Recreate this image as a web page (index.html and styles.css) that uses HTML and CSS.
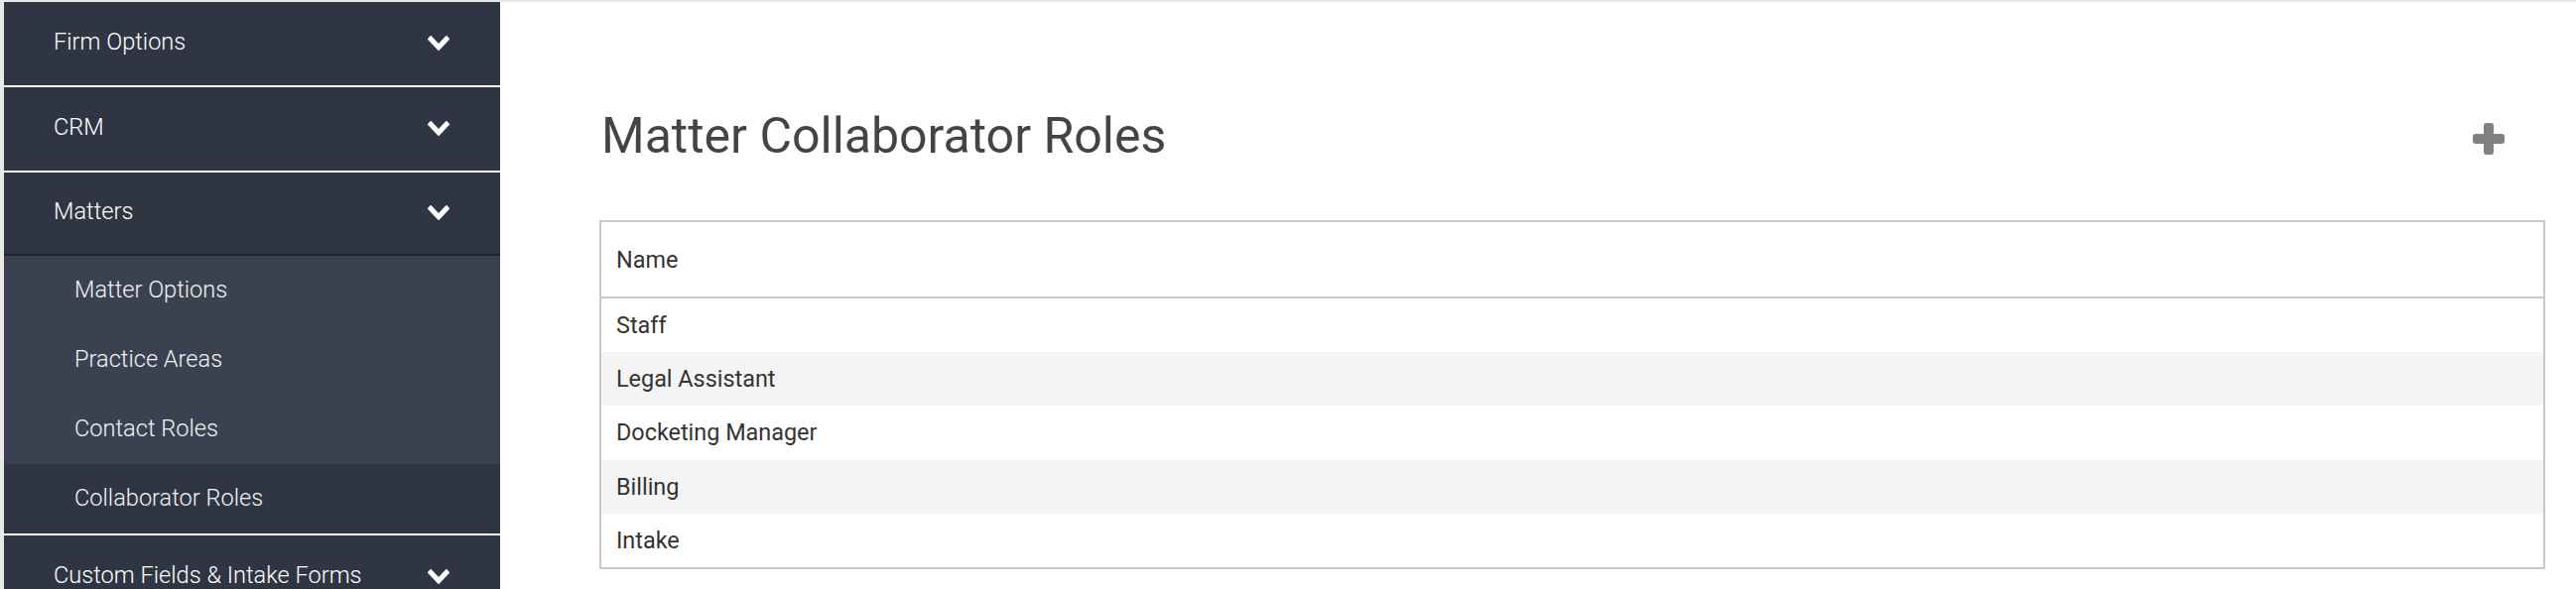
FILE: index.html
```html
<!DOCTYPE html>
<html lang="en">
<head>
<meta charset="utf-8">
<title>Matter Collaborator Roles</title>
<link rel="stylesheet" href="styles.css">
</head>
<body>
<div class="app">
  <nav class="sidebar">
    <div class="group">
      <div class="group-head">
        <span>Firm Options</span>
        <svg class="chev" viewBox="90 533 1612 1035" preserveAspectRatio="none"><path d="M1683 808l-742 741q-19 19-45 19t-45-19l-742-741q-19-19-19-45.5t19-45.5l166-165q19-19 45-19t45 19l531 531 531-531q19-19 45-19t45 19l166 165q19 19 19 45.5t-19 45.5z"/></svg>
      </div>
    </div>
    <div class="group">
      <div class="group-head">
        <span>CRM</span>
        <svg class="chev" viewBox="90 533 1612 1035" preserveAspectRatio="none"><path d="M1683 808l-742 741q-19 19-45 19t-45-19l-742-741q-19-19-19-45.5t19-45.5l166-165q19-19 45-19t45 19l531 531 531-531q19-19 45-19t45 19l166 165q19 19 19 45.5t-19 45.5z"/></svg>
      </div>
    </div>
    <div class="group open">
      <div class="group-head">
        <span>Matters</span>
        <svg class="chev" viewBox="90 533 1612 1035" preserveAspectRatio="none"><path d="M1683 808l-742 741q-19 19-45 19t-45-19l-742-741q-19-19-19-45.5t19-45.5l166-165q19-19 45-19t45 19l531 531 531-531q19-19 45-19t45 19l166 165q19 19 19 45.5t-19 45.5z"/></svg>
      </div>
      <ul class="sub">
        <li>Matter Options</li>
        <li>Practice Areas</li>
        <li>Contact Roles</li>
        <li class="active">Collaborator Roles</li>
      </ul>
    </div>
    <div class="group">
      <div class="group-head">
        <span>Custom Fields &amp; Intake Forms</span>
        <svg class="chev" viewBox="90 533 1612 1035" preserveAspectRatio="none"><path d="M1683 808l-742 741q-19 19-45 19t-45-19l-742-741q-19-19-19-45.5t19-45.5l166-165q19-19 45-19t45 19l531 531 531-531q19-19 45-19t45 19l166 165q19 19 19 45.5t-19 45.5z"/></svg>
      </div>
    </div>
  </nav>
  <main class="main">
    <div class="page-head">
      <h1 class="title">Matter Collaborator Roles</h1>
      <svg class="plus" viewBox="0 0 32 32"><rect x="11" y="0" width="10" height="32" rx="3"/><rect x="0" y="11" width="32" height="10" rx="3"/></svg>
    </div>
    <div class="table">
      <div class="thead">Name</div>
      <div class="row">Staff</div>
      <div class="row alt">Legal Assistant</div>
      <div class="row">Docketing Manager</div>
      <div class="row alt">Billing</div>
      <div class="row">Intake</div>
    </div>
  </main>
</div>
</body>
</html>
```

FILE: styles.css
```css
html, body {
  margin: 0;
  padding: 0;
  height: 594px;
  overflow: hidden;
  font-family: Roboto, "Liberation Sans", sans-serif;
}

.app {
  display: flex;
  height: 594px;
  box-sizing: border-box;
  padding: 2px 0 0 4px;
  background: #e8e8e8;
}

.sidebar {
  width: 500px;
  flex: none;
  background: #2f3542;
  color: #ffffff;
  font-size: 23.6px;
  font-weight: 300;
  overflow: hidden;
}

.group {
  border-bottom: 2px solid #ffffff;
}

.group-head {
  height: 84px;
  box-sizing: border-box;
  display: flex;
  align-items: center;
  justify-content: space-between;
  padding: 0 51px 4px 50px;
  background: #2f3542;
}

.group.open .group-head {
  border-bottom: 2px solid #1f252e;
}

.chev {
  width: 22px;
  height: 15px;
  fill: #ffffff;
  margin-top: 3px;
}

.sub {
  list-style: none;
  margin: 0;
  padding: 0;
  background: #3a4251;
}

.sub li {
  height: 70px;
  box-sizing: border-box;
  display: flex;
  align-items: center;
  padding: 0 0 2px 71px;
  color: #f2f2f2;
}

.sub li.active {
  background: #2f3542;
}

.main {
  flex: 1;
  background: #ffffff;
  padding: 105px 31px 0 100px;
}

.page-head {
  display: flex;
  align-items: center;
  justify-content: space-between;
  height: 60px;
  padding: 0 41px 0 2px;
}

.title {
  margin: 0;
  font-size: 50px;
  font-weight: 400;
  line-height: 60px;
  color: #444444;
}

.plus {
  width: 32px;
  height: 32px;
  fill: #808080;
  margin-top: 6px;
}

.table {
  margin-top: 55px;
  border: 2px solid #c8c8c8;
  font-size: 23.4px;
  color: #333333;
}

.thead {
  height: 75px;
  display: flex;
  align-items: center;
  padding-left: 15px;
  border-bottom: 2px solid #c8c8c8;
}

.row {
  height: 54.2px;
  display: flex;
  align-items: center;
  padding-left: 15px;
}

.row.alt {
  background: #f4f4f4;
}
```
